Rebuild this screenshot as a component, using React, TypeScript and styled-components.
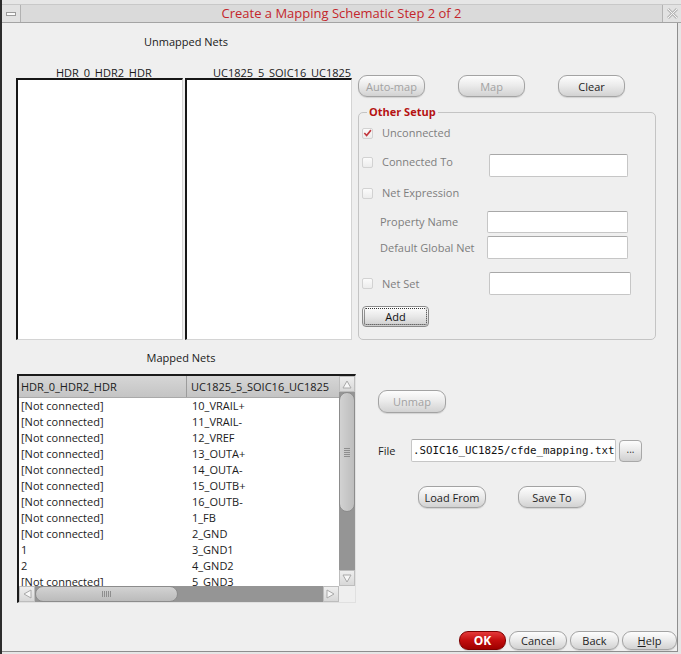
import React from "react";
import styled, { createGlobalStyle, css } from "styled-components";

const Global = createGlobalStyle`
  html, body { margin: 0; padding: 0; background: #e6e6e6; }
  body { font-family: "Open Sans", "DejaVu Sans", sans-serif; font-size: 11px; color: #1e1e1e; }
  * { box-sizing: border-box; }
`;

const Window = styled.div`
  width: 681px;
  height: 654px;
  background: #e6e6e6;
  border-left: 2px solid #2c2c2c;
  padding-top: 4px;
  display: flex;
  flex-direction: column;
  overflow: hidden;
`;

const TitleBar = styled.div`
  height: 19px;
  flex: none;
  display: flex;
  background: #dadada;
  border-top: 1px solid #c8c8c8;
  border-bottom: 1px solid #a4a4a4;
`;

const TitleButton = styled.div<{ $side: "left" | "right" }>`
  width: 19px;
  flex: none;
  display: flex;
  align-items: center;
  justify-content: center;
  background: #e2e2e2;
  ${(p) =>
    p.$side === "left"
      ? css`border-right: 1px solid #b2b2b2;`
      : css`border-left: 1px solid #b2b2b2;`}
`;

const MinimizeGlyph = styled.span`
  width: 10px;
  height: 4px;
  background: #fbfbfb;
  border: 1px solid #9a9a9a;
`;

const TitleText = styled.div`
  flex: 1;
  text-align: center;
  font-size: 13px;
  line-height: 17px;
  color: #c4262b;
`;

const Body = styled.div`
  flex: 1;
  width: 676px;
  margin-bottom: 2px;
  background: #efefef;
  border-right: 1px solid #8e8e8e;
  border-bottom: 1px solid #8e8e8e;
  padding-left: 14px;
  display: flex;
  flex-direction: column;
`;

const Section = styled.div<{ $height: number }>`
  display: grid;
  grid-template-columns: 340px 298px;
  column-gap: 2px;
  height: ${(p) => p.$height}px;
  flex: none;
`;

const Column = styled.div<{ $padTop?: number; $padLeft?: number }>`
  display: flex;
  flex-direction: column;
  padding-top: ${(p) => p.$padTop ?? 0}px;
  padding-left: ${(p) => p.$padLeft ?? 0}px;
`;

const Caption = styled.div<{ $top: number; $shift?: number }>`
  margin-top: ${(p) => p.$top}px;
  line-height: 14px;
  height: 14px;
  text-align: center;
  padding-right: ${(p) => p.$shift ?? 0}px;
  color: #1a1a1a;
`;

const ListHeaders = styled.div`
  display: flex;
  gap: 2px;
  margin-top: 17px;
  height: 12px;
`;

const ListHeader = styled.div<{ $indent: number }>`
  width: 167px;
  height: 12px;
  line-height: 14px;
  overflow: hidden;
  white-space: nowrap;
  padding-left: ${(p) => p.$indent}px;
  color: #1a1a1a;
`;

const Lists = styled.div`
  display: flex;
  gap: 2px;
  height: 262px;
`;

const ListBox = styled.div`
  width: 167px;
  height: 100%;
  background: #ffffff;
  border-top: 2px solid #161616;
  border-left: 2px solid #161616;
  border-right: 1px solid #d4d4d4;
  border-bottom: 1px solid #d4d4d4;
`;

const ButtonRow = styled.div<{ $gap: number; $top?: number; $left?: number }>`
  display: flex;
  gap: ${(p) => p.$gap}px;
  margin-top: ${(p) => p.$top ?? 0}px;
  padding-left: ${(p) => p.$left ?? 0}px;
`;

const PillButton = styled.button<{ $w: number; $h?: number; $disabled?: boolean }>`
  width: ${(p) => p.$w}px;
  height: ${(p) => p.$h ?? 22}px;
  padding: 0;
  border: 1px solid #a3a3a3;
  border-radius: 9px;
  background: linear-gradient(#fdfdfd, #ececec 45%, #d2d2d2);
  box-shadow: 0 1px 1px rgba(0, 0, 0, 0.12);
  font-family: "Open Sans", "DejaVu Sans", sans-serif;
  font-size: 11px;
  line-height: 1;
  color: ${(p) => (p.$disabled ? "#a2a2a2" : "#1e1e1e")};
  flex: none;
`;

const OkButton = styled(PillButton)`
  background: linear-gradient(#e43a3a, #c20d0d 50%, #9e0000);
  border-color: #7d0000;
  color: #ffffff;
  font-weight: 700;
  font-size: 12px;
`;

const AddButton = styled.button`
  width: 67px;
  height: 21px;
  padding: 0;
  border: 1px solid #8a8a8a;
  border-radius: 4px;
  background: linear-gradient(#fdfdfd, #e8e8e8 50%, #cdcdcd);
  font-family: "Open Sans", "DejaVu Sans", sans-serif;
  font-size: 11px;
  color: #111;
  outline: 1px dotted #333;
  outline-offset: -3px;
`;

const SmallButton = styled.button`
  width: 23px;
  height: 22px;
  margin-top: 1px;
  padding: 0 0 4px;
  border: 1px solid #a8a8a8;
  border-radius: 4px;
  background: linear-gradient(#fdfdfd, #e8e8e8 50%, #d0d0d0);
  font-family: "Open Sans", sans-serif;
  font-size: 10px;
  color: #333;
`;

const Group = styled.div`
  position: relative;
  margin-top: 15px;
  width: 298px;
  height: 228px;
  border: 1px solid #c4c4c4;
  border-radius: 5px;
  padding-left: 3px;
  display: flex;
  flex-direction: column;
`;

const GroupTitle = styled.span`
  position: absolute;
  top: -8px;
  left: 8px;
  padding: 0 2px;
  background: #efefef;
  font-weight: 700;
  line-height: 14px;
  color: #b51212;
`;

const FormRow = styled.div<{ $top: number; $h: number; $align?: string; $indent?: number }>`
  display: flex;
  align-items: ${(p) => p.$align ?? "center"};
  margin-top: ${(p) => p.$top}px;
  height: ${(p) => p.$h}px;
  padding-left: ${(p) => p.$indent ?? 0}px;
`;

const Check = styled.span<{ $top?: number }>`
  width: 11px;
  height: 11px;
  flex: none;
  margin-top: ${(p) => p.$top ?? 0}px;
  margin-right: 9px;
  border: 1px solid #d2d2d2;
  border-radius: 2px;
  background: linear-gradient(#fbfbfb, #ececec);
  display: flex;
  align-items: center;
  justify-content: center;
`;

const FieldLabel = styled.span<{ $w?: number }>`
  width: ${(p) => (p.$w ? `${p.$w}px` : "auto")};
  flex: none;
  line-height: 16px;
  color: #7e7e7e;
`;

const TextBox = styled.input<{ $w: number; $h?: number }>`
  width: ${(p) => p.$w}px;
  height: ${(p) => p.$h ?? 23}px;
  flex: none;
  border: 1px solid #c6c6c6;
  border-top-color: #a8a8a8;
  border-radius: 2px;
  background: #ffffff;
  padding: 0 2px;
  margin: 0;
  font-family: "Open Sans", sans-serif;
  font-size: 11px;
`;

const MonoBox = styled(TextBox)`
  font-family: "DejaVu Sans Mono", "Liberation Mono", monospace;
  font-size: 10.8px;
  color: #111;
  padding: 0 0 0 1px;
`;

const PlainLabel = styled.span<{ $w: number }>`
  width: ${(p) => p.$w}px;
  flex: none;
  color: #1e1e1e;
`;

/* Mapped table */
const Table = styled.div`
  margin-top: 9px;
  margin-left: 1px;
  width: 339px;
  height: 229px;
  border-top: 2px solid #1a1a1a;
  border-left: 2px solid #1a1a1a;
  border-right: 1px solid #e0e0e0;
  border-bottom: 1px solid #e0e0e0;
  background: #ffffff;
  display: grid;
  grid-template-columns: 320px 16px;
  grid-template-rows: 210px 16px;
`;

const Viewport = styled.div`
  overflow: hidden;
`;

const HeaderRow = styled.div`
  display: grid;
  grid-template-columns: 168px 1fr;
  height: 22px;
  background: linear-gradient(#d6d6d6, #c4c4c4);
  border-bottom: 1px solid #a9a9a9;
`;

const HeaderCell = styled.div<{ $divider?: boolean }>`
  line-height: 21px;
  padding-left: ${(p) => (p.$divider ? 2 : 4)}px;
  border-right: ${(p) => (p.$divider ? "1px solid #9c9c9c" : "none")};
  white-space: nowrap;
  overflow: hidden;
  color: #202020;
`;

const DataRow = styled.div`
  display: grid;
  grid-template-columns: 168px 1fr;
  height: 16px;
`;

const DataCell = styled.div<{ $first?: boolean }>`
  line-height: 16px;
  padding-left: ${(p) => (p.$first ? 2 : 5)}px;
  white-space: nowrap;
  color: #1c1c1c;
`;

const ScrollBar = styled.div<{ $vertical?: boolean }>`
  display: flex;
  flex-direction: ${(p) => (p.$vertical ? "column" : "row")};
  background: #959595;
`;

const ArrowBtn = styled.div`
  width: 16px;
  height: 16px;
  flex: none;
  background: linear-gradient(#eeeeee, #d8d8d8);
  border: 1px solid #bdbdbd;
  display: flex;
  align-items: center;
  justify-content: center;
`;

const Thumb = styled.div<{ $vertical?: boolean; $len: number }>`
  flex: none;
  ${(p) =>
    p.$vertical
      ? css`
          height: ${p.$len}px;
          width: 16px;
          background: linear-gradient(90deg, #d2d2d2, #bdbdbd);
          flex-direction: column;
        `
      : css`
          width: ${p.$len}px;
          height: 16px;
          background: linear-gradient(#d2d2d2, #bbbbbb);
        `}
  border: 1px solid #8c8c8c;
  border-radius: 8px;
  display: flex;
  align-items: center;
  justify-content: center;
  gap: 1px;
`;

const Grip = styled.span<{ $vertical?: boolean }>`
  background: #8e8e8e;
  ${(p) => (p.$vertical ? css`width: 6px; height: 1px;` : css`width: 1px; height: 6px;`)}
`;

const Track = styled.div`
  flex: 1;
`;

const Corner = styled.div`
  background: #efefef;
`;

const Footer = styled.div`
  margin-top: auto;
  padding-bottom: 1px;
  display: flex;
  justify-content: flex-end;
  gap: 3px;
`;

const Underlined = styled.span`
  text-decoration: underline;
`;

const rows: [string, string][] = [
  ["[Not connected]", "10_VRAIL+"],
  ["[Not connected]", "11_VRAIL-"],
  ["[Not connected]", "12_VREF"],
  ["[Not connected]", "13_OUTA+"],
  ["[Not connected]", "14_OUTA-"],
  ["[Not connected]", "15_OUTB+"],
  ["[Not connected]", "16_OUTB-"],
  ["[Not connected]", "1_FB"],
  ["[Not connected]", "2_GND"],
  ["1", "3_GND1"],
  ["2", "4_GND2"],
  ["[Not connected]", "5_GND3"],
];

const Arrow = ({ dir }: { dir: "up" | "down" | "left" | "right" }) => {
  const pts = {
    up: "5,2 9,9 1,9",
    down: "1,2 9,2 5,9",
    left: "2,5 9,1 9,9",
    right: "1,1 8,5 1,9",
  }[dir];
  return (
    <svg width="10" height="11" viewBox="0 0 10 11">
      <polygon points={pts} fill="#f7f7f7" stroke="#a9a9a9" strokeWidth="1" />
    </svg>
  );
};

const CheckMark = () => (
  <svg width="10" height="10" viewBox="0 0 10 10">
    <path d="M1.5 5 L4 7.8 L8.8 1.8" fill="none" stroke="#c2383e" strokeWidth="1.8" />
  </svg>
);

const CloseGlyph = () => (
  <svg width="13" height="13" viewBox="0 0 13 13">
    <path d="M2 2 L11 11 M11 2 L2 11" stroke="#b9b9b9" strokeWidth="3" />
    <path d="M2 2 L11 11 M11 2 L2 11" stroke="#f4f4f4" strokeWidth="1" />
  </svg>
);

export default function App() {
  return (
    <>
      <Global />
      <Window>
        <TitleBar>
          <TitleButton $side="left">
            <MinimizeGlyph />
          </TitleButton>
          <TitleText>Create a Mapping Schematic Step 2 of 2</TitleText>
          <TitleButton $side="right">
            <CloseGlyph />
          </TitleButton>
        </TitleBar>
        <Body>
          <Section $height={317}>
            <Column>
              <Caption $top={12}>Unmapped Nets</Caption>
              <ListHeaders>
                <ListHeader $indent={40}>HDR_0_HDR2_HDR</ListHeader>
                <ListHeader $indent={28}>UC1825_5_SOIC16_UC1825</ListHeader>
              </ListHeaders>
              <Lists>
                <ListBox />
                <ListBox />
              </Lists>
            </Column>
            <Column $padTop={52}>
              <ButtonRow $gap={33}>
                <PillButton $w={67} $disabled>Auto-map</PillButton>
                <PillButton $w={67} $disabled>Map</PillButton>
                <PillButton $w={67}>Clear</PillButton>
              </ButtonRow>
              <Group>
                <GroupTitle>Other Setup</GroupTitle>
                <FormRow $top={11} $h={18}>
                  <Check>
                    <CheckMark />
                  </Check>
                  <FieldLabel>Unconnected</FieldLabel>
                </FormRow>
                <FormRow $top={12} $h={23} $align="flex-start">
                  <Check $top={3} />
                  <FieldLabel $w={107}>Connected To</FieldLabel>
                  <TextBox $w={139} readOnly />
                </FormRow>
                <FormRow $top={8} $h={16}>
                  <Check />
                  <FieldLabel>Net Expression</FieldLabel>
                </FormRow>
                <FormRow $top={10} $h={22} $indent={18}>
                  <FieldLabel $w={107}>Property Name</FieldLabel>
                  <TextBox $w={141} $h={22} readOnly />
                </FormRow>
                <FormRow $top={3} $h={23} $indent={18}>
                  <FieldLabel $w={107}>Default Global Net</FieldLabel>
                  <TextBox $w={141} readOnly />
                </FormRow>
                <FormRow $top={13} $h={23}>
                  <Check />
                  <FieldLabel $w={107}>Net Set</FieldLabel>
                  <TextBox $w={142} readOnly />
                </FormRow>
                <FormRow $top={11} $h={21}>
                  <AddButton>Add</AddButton>
                </FormRow>
              </Group>
            </Column>
          </Section>
          <Section $height={270}>
            <Column>
              <Caption $top={11} $shift={10}>Mapped Nets</Caption>
              <Table>
                <Viewport>
                  <HeaderRow>
                    <HeaderCell $divider>HDR_0_HDR2_HDR</HeaderCell>
                    <HeaderCell>UC1825_5_SOIC16_UC1825</HeaderCell>
                  </HeaderRow>
                  {rows.map(([a, b], i) => (
                    <DataRow key={i}>
                      <DataCell $first>{a}</DataCell>
                      <DataCell>{b}</DataCell>
                    </DataRow>
                  ))}
                </Viewport>
                <ScrollBar $vertical>
                  <ArrowBtn>
                    <Arrow dir="up" />
                  </ArrowBtn>
                  <Thumb $vertical $len={120}>
                    {[0, 1, 2, 3, 4].map((k) => (
                      <Grip key={k} $vertical />
                    ))}
                  </Thumb>
                  <Track />
                  <ArrowBtn>
                    <Arrow dir="down" />
                  </ArrowBtn>
                </ScrollBar>
                <ScrollBar>
                  <ArrowBtn>
                    <Arrow dir="left" />
                  </ArrowBtn>
                  <Thumb $len={143}>
                    {[0, 1, 2, 3, 4].map((k) => (
                      <Grip key={k} />
                    ))}
                  </Thumb>
                  <Track />
                  <ArrowBtn>
                    <Arrow dir="right" />
                  </ArrowBtn>
                </ScrollBar>
                <Corner />
              </Table>
            </Column>
            <Column $padTop={50} $padLeft={20}>
              <ButtonRow $gap={0}>
                <PillButton $w={68} $h={23} $disabled>Unmap</PillButton>
              </ButtonRow>
              <FormRow $top={26} $h={23} $align="flex-start">
                <PlainLabel $w={33} style={{ lineHeight: "23px" }}>File</PlainLabel>
                <MonoBox $w={205} readOnly value=".SOIC16_UC1825/cfde_mapping.txt" />
                <span style={{ width: 3 }} />
                <SmallButton>...</SmallButton>
              </FormRow>
              <ButtonRow $gap={32} $top={24} $left={40}>
                <PillButton $w={68}>Load From</PillButton>
                <PillButton $w={68}>Save To</PillButton>
              </ButtonRow>
            </Column>
          </Section>
          <Footer>
            <OkButton $w={47} $h={19}>OK</OkButton>
            <PillButton $w={58} $h={19}>Cancel</PillButton>
            <PillButton $w={49} $h={19}>Back</PillButton>
            <PillButton $w={55} $h={19}>
              <Underlined>H</Underlined>elp
            </PillButton>
          </Footer>
        </Body>
      </Window>
    </>
  );
}
